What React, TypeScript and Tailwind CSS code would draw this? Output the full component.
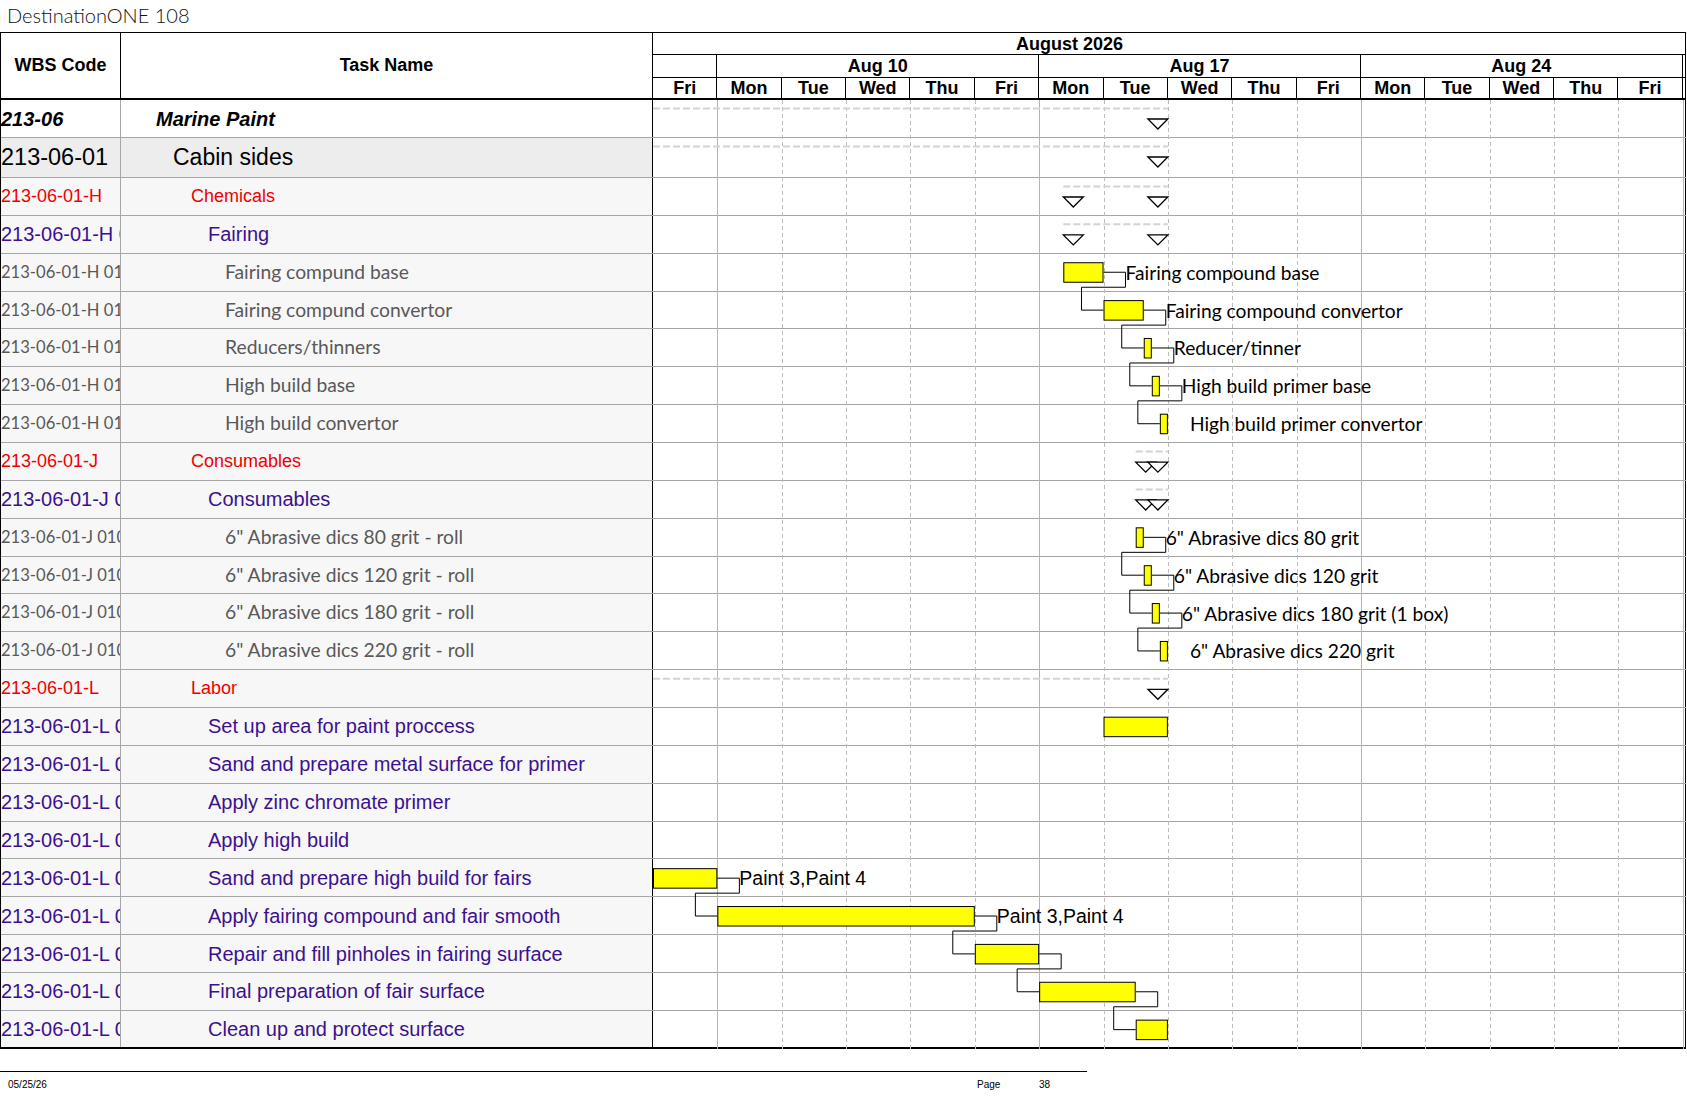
import React from 'react'

const D = 64.36

type Kind = 'top' | 'phase' | 'group' | 'sub' | 'item'

interface Row {
  wbs: string
  name: string
  kind: Kind
}

const rows: Row[] = [
  { wbs: '213-06', name: 'Marine Paint', kind: 'top' },
  { wbs: '213-06-01', name: 'Cabin sides', kind: 'phase' },
  { wbs: '213-06-01-H', name: 'Chemicals', kind: 'group' },
  { wbs: '213-06-01-H 01', name: 'Fairing', kind: 'sub' },
  { wbs: '213-06-01-H 0101', name: 'Fairing compund base', kind: 'item' },
  { wbs: '213-06-01-H 0102', name: 'Fairing compund convertor', kind: 'item' },
  { wbs: '213-06-01-H 0103', name: 'Reducers/thinners', kind: 'item' },
  { wbs: '213-06-01-H 0104', name: 'High build base', kind: 'item' },
  { wbs: '213-06-01-H 0105', name: 'High build convertor', kind: 'item' },
  { wbs: '213-06-01-J', name: 'Consumables', kind: 'group' },
  { wbs: '213-06-01-J 01', name: 'Consumables', kind: 'sub' },
  { wbs: '213-06-01-J 0101', name: '6" Abrasive dics 80 grit - roll', kind: 'item' },
  { wbs: '213-06-01-J 0102', name: '6" Abrasive dics 120 grit - roll', kind: 'item' },
  { wbs: '213-06-01-J 0103', name: '6" Abrasive dics 180 grit - roll', kind: 'item' },
  { wbs: '213-06-01-J 0104', name: '6" Abrasive dics 220 grit - roll', kind: 'item' },
  { wbs: '213-06-01-L', name: 'Labor', kind: 'group' },
  { wbs: '213-06-01-L 01', name: 'Set up area for paint proccess', kind: 'sub' },
  { wbs: '213-06-01-L 02', name: 'Sand and prepare metal surface for primer', kind: 'sub' },
  { wbs: '213-06-01-L 03', name: 'Apply zinc chromate primer', kind: 'sub' },
  { wbs: '213-06-01-L 04', name: 'Apply high build', kind: 'sub' },
  { wbs: '213-06-01-L 05', name: 'Sand and prepare high build for fairs', kind: 'sub' },
  { wbs: '213-06-01-L 06', name: 'Apply fairing compound and fair smooth', kind: 'sub' },
  { wbs: '213-06-01-L 07', name: 'Repair and fill pinholes in fairing surface', kind: 'sub' },
  { wbs: '213-06-01-L 08', name: 'Final preparation of fair surface', kind: 'sub' },
  { wbs: '213-06-01-L 09', name: 'Clean up and protect surface', kind: 'sub' },
]

const nameCls: Record<Kind, string> = {
  top: 'font-bold italic text-[20px] text-black',
  phase: 'text-[23px] text-black',
  group: 'text-[18px] text-[#ee0000]',
  sub: 'text-[20px] text-[#3c1190]',
  item: "font-['Lato',sans-serif] text-[19.3px] text-[#595959]",
}

// the WBS codes of leaf items are set a little tighter than their names
const wbsCls: Record<Kind, string> = {
  top: 'font-bold italic text-[20px] text-black',
  phase: 'text-[23.5px] text-black',
  group: 'text-[18px] text-[#ee0000]',
  sub: 'text-[20px] text-[#3c1190]',
  item: "font-['Lato',sans-serif] text-[16.6px] text-[#595959]",
}

const indentCls: Record<Kind, string> = {
  top: 'pl-[35px]',
  phase: 'pl-[52px]',
  group: 'pl-[70px]',
  sub: 'pl-[87px]',
  item: 'pl-[104px]',
}

const bgCls: Record<Kind, string> = {
  top: 'bg-white',
  phase: 'bg-[#ededed]',
  group: 'bg-[#f7f7f7]',
  sub: 'bg-[#f7f7f7]',
  item: 'bg-[#f7f7f7]',
}

const heights = rows.map((_, i) => (i === 0 ? 38 : i === 1 ? 40 : 37.87))
const tops: number[] = []
heights.reduce((acc, h, i) => {
  tops[i] = acc
  return acc + h
}, 0)
const bodyH = tops[rows.length - 1] + heights[rows.length - 1]

// summary rows: start / end in days from the first shown day
const summaries = [
  { row: 0, s: -1, e: 8 },
  { row: 1, s: -1, e: 8 },
  { row: 2, s: 6.375, e: 8 },
  { row: 3, s: 6.375, e: 8 },
  { row: 9, s: 7.5, e: 8 },
  { row: 10, s: 7.5, e: 8 },
  { row: 15, s: -1, e: 8 },
]

const bars: { row: number; s: number; e: number; label?: string; arial?: boolean }[] = [
  { row: 4, s: 6.375, e: 7, label: 'Fairing compound base' },
  { row: 5, s: 7, e: 7.625, label: 'Fairing compound convertor' },
  { row: 6, s: 7.625, e: 7.75, label: 'Reducer/tinner' },
  { row: 7, s: 7.75, e: 7.875, label: 'High build primer base' },
  { row: 8, s: 7.875, e: 8, label: 'High build primer convertor' },
  { row: 11, s: 7.5, e: 7.625, label: '6" Abrasive dics 80 grit' },
  { row: 12, s: 7.625, e: 7.75, label: '6" Abrasive dics 120 grit' },
  { row: 13, s: 7.75, e: 7.875, label: '6" Abrasive dics 180 grit (1 box)' },
  { row: 14, s: 7.875, e: 8, label: '6" Abrasive dics 220 grit' },
  { row: 16, s: 7, e: 8 },
  { row: 20, s: 0, e: 1, label: 'Paint 3,Paint 4', arial: true },
  { row: 21, s: 1, e: 5, label: 'Paint 3,Paint 4', arial: true },
  { row: 22, s: 5, e: 6 },
  { row: 23, s: 6, e: 7.5 },
  { row: 24, s: 7.5, e: 8 },
]

const links = [
  [4, 5], [5, 6], [6, 7], [7, 8],
  [11, 12], [12, 13], [13, 14],
  [20, 21], [21, 22], [22, 23], [23, 24],
]

const days = ['Fri', 'Mon', 'Tue', 'Wed', 'Thu', 'Fri', 'Mon', 'Tue', 'Wed', 'Thu', 'Fri', 'Mon', 'Tue', 'Wed', 'Thu', 'Fri']

function rowHeightCls(i: number) {
  if (i === 0) return 'h-[38px]'
  if (i === 1) return 'h-[40px]'
  return 'h-[37.87px]'
}

function GanttChart() {
  const barOf = (row: number) => bars.find((b) => b.row === row)!
  return (
    <svg className="absolute left-[652px] top-0" width={1034} height={bodyH}>
      {Array.from({ length: 16 }, (_, k) => {
        const i = k + 1
        const x = Math.round(i * D) + 0.5
        const week = i === 1 || i === 6 || i === 11 || i === 16
        return (
          <line
            key={i}
            x1={x}
            x2={x}
            y1={0}
            y2={bodyH}
            stroke={week ? '#b4b4b4' : '#bdbdbd'}
            strokeWidth={1}
            strokeDasharray={week ? undefined : '4 3'}
          />
        )
      })}

      {summaries.map((sm) => {
        const top = tops[sm.row]
        const x1 = Math.max(sm.s, 0) * D
        const x2 = sm.e * D
        const ty = top + 19
        const tri = (right: number) =>
          `${right - 20},${ty} ${right},${ty} ${right - 10},${ty + 10}`
        return (
          <g key={sm.row}>
            <line x1={x1} x2={x2} y1={top + 8.5} y2={top + 8.5} stroke="#d4d4d4" strokeWidth={2} strokeDasharray="7 3" />
            {sm.s >= 0 && <polygon points={tri(x1 + 20)} fill="white" stroke="black" strokeWidth={1.3} />}
            <polygon points={tri(x2)} fill="white" stroke="black" strokeWidth={1.3} />
          </g>
        )
      })}

      {links.map(([a, b]) => {
        const pa = barOf(a)
        const pb = barOf(b)
        const ax = pa.e * D
        const aTop = tops[a] + 8.5
        const bx = pb.s * D
        const bMid = tops[b] + 18.5
        const d = `M${ax},${aTop + 10} H${ax + 22} V${aTop + 25} H${bx - 22} V${bMid} H${bx}`
        return <path key={`${a}-${b}`} d={d} fill="none" stroke="black" strokeWidth={1} />
      })}

      {bars.map((b) => {
        const x = b.s * D
        const w = (b.e - b.s) * D
        const y = tops[b.row] + 8.5
        return (
          <g key={b.row}>
            <rect x={x + 0.5} y={y + 0.5} width={w - 1} height={19.5} fill="#ffff00" stroke="black" strokeWidth={1} />
            {b.label && (
              <text
                x={b.e * D + 22}
                y={y + 10}
                dominantBaseline="central"
                fontFamily={b.arial ? '"Liberation Sans", Arial, sans-serif' : 'Lato, "Noto Sans", sans-serif'}
                fontSize={b.arial ? 19.5 : 19.2}
                fill="black"
              >
                {b.label}
              </text>
            )}
          </g>
        )
      })}
    </svg>
  )
}

export default function App() {
  return (
    <div className="w-[1687px] h-[1097px] bg-white overflow-hidden font-[family-name:'Liberation_Sans',Arial,sans-serif] text-black">
      <div className="h-[32px] pl-[7px] pb-[2px] flex items-center font-['Lato',sans-serif] font-light text-[20px] text-[#111]">
        DestinationONE 108
      </div>

      <div className="w-[1686px] border-l border-black">
        {/* header */}
        <div className="flex h-[68px] border-t border-b-2 border-black">
          <div className="w-[120px] border-r border-black flex items-center justify-center font-bold text-[18px]">
            WBS Code
          </div>
          <div className="w-[532px] border-r border-black flex items-center justify-center font-bold text-[18px]">
            Task Name
          </div>
          <div className="w-[1033px] border-r border-black flex flex-col font-bold text-[18px] leading-none">
            <div className="h-[22px] border-b border-black flex items-center pl-[363px]">August 2026</div>
            <div className="h-[23px] border-b border-black flex">
              <div className="w-[64.36px] border-r border-black" />
              {['Aug 10', 'Aug 17', 'Aug 24'].map((w) => (
                <div key={w} className="w-[321.8px] border-r border-black flex items-center justify-center">
                  {w}
                </div>
              ))}
            </div>
            <div className="flex-1 flex">
              {days.map((d, i) => (
                <div key={i} className="w-[64.36px] border-r border-black flex items-center justify-center">
                  {d}
                </div>
              ))}
            </div>
          </div>
        </div>

        {/* body */}
        <div className="relative">
          {rows.map((r, i) => (
            <div
              key={i}
              className={`flex ${rowHeightCls(i)} ${i === rows.length - 1 ? 'border-b-2 border-black' : 'border-b border-[#a6a6a6]'}`}
            >
              <div className={`w-[120px] border-r border-[#a6a6a6] flex items-center overflow-hidden whitespace-nowrap ${bgCls[r.kind]} ${wbsCls[r.kind]}`}>
                {r.wbs}
              </div>
              <div className={`w-[532px] border-r border-black flex items-center whitespace-nowrap ${bgCls[r.kind]} ${nameCls[r.kind]} ${indentCls[r.kind]}`}>
                {r.name}
              </div>
              <div className="w-[1033px] border-r border-black bg-white" />
            </div>
          ))}
          <GanttChart />
        </div>
      </div>

      {/* footer */}
      <div className="mt-[22px] w-[1087px] border-t border-black flex pt-[7px] text-[10px] leading-[12px] text-black">
        <div className="w-[977px] pl-[8px]">05/25/26</div>
        <div className="w-[62px]">Page</div>
        <div>38</div>
      </div>
    </div>
  )
}
